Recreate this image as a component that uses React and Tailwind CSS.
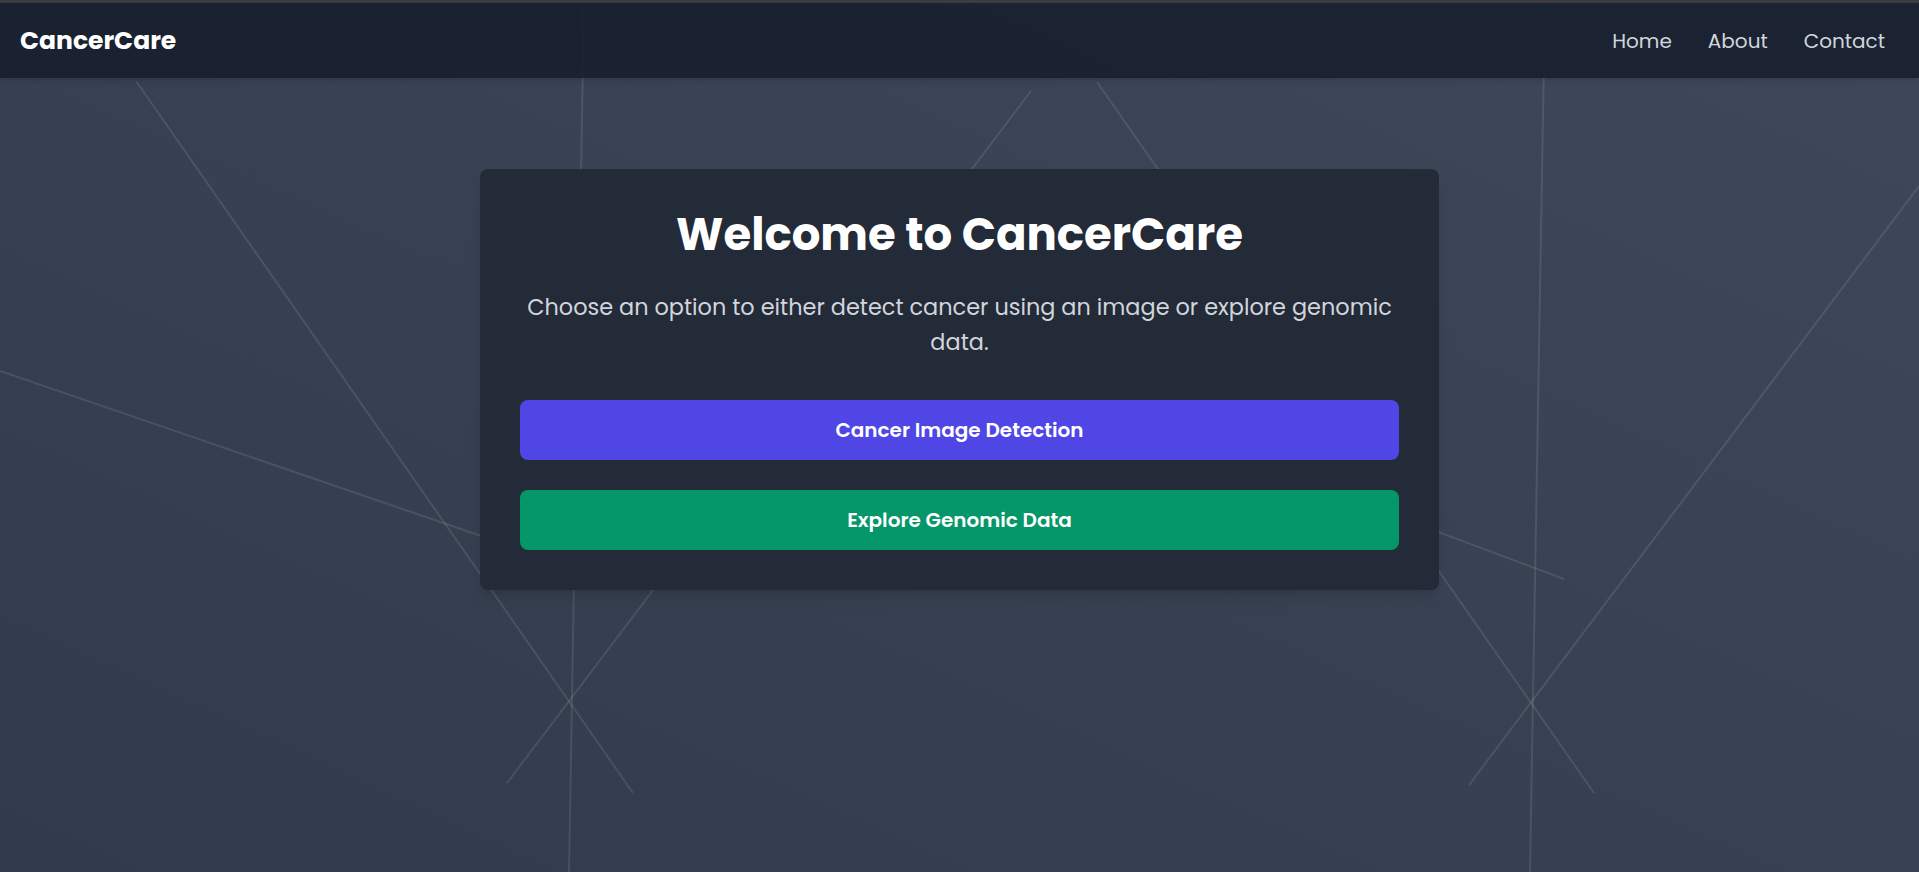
import React from 'react'

const lines = [
  [136, 81, 633, 793],
  [584, 0, 569, 872],
  [1031, 91, 507, 783],
  [1097, 82, 1594, 793],
  [1545, 0, 1530, 872],
  [1919, 186, 1469, 785],
  [0, 371, 560, 563],
  [1350, 499, 1564, 579],
]

export default function App() {
  return (
    <div className="relative min-h-screen overflow-hidden bg-linear-to-tr from-[#323b4b] to-[#3f4859] font-['Poppins','Inter',sans-serif]">
      {/* background lines */}
      <svg className="absolute inset-0 w-full h-full pointer-events-none" viewBox="0 0 1919 872" preserveAspectRatio="none">
        {lines.map(([x1, y1, x2, y2], i) => (
          <line key={i} x1={x1} y1={y1} x2={x2} y2={y2} stroke="rgba(255,255,255,0.1)" strokeWidth="2" />
        ))}
      </svg>

      <div className="relative h-[3px] bg-[#3c3c3c]" />
      <nav className="relative z-10 h-[75px] flex items-center justify-between pl-5 pr-[34px] bg-[#171e2e]/90 shadow-md">
        <span className="text-[25px] font-bold text-white">CancerCare</span>
        <div className="flex items-center gap-9 text-xl text-gray-300">
          <a href="#">Home</a>
          <a href="#">About</a>
          <a href="#">Contact</a>
        </div>
      </nav>

      <main className="relative z-10 flex justify-center pt-[91px]">
        <div className="w-1/2 bg-[#232a38] rounded-lg shadow-lg p-10 text-center">
          <h1 className="text-[45px] font-bold text-white leading-[52px] mb-[29px]">Welcome to CancerCare</h1>
          <p className="text-[22.4px] leading-[35px] text-gray-300 mb-10">
            Choose an option to either detect cancer using an image or explore genomic data.
          </p>
          <button className="w-full py-4 text-xl leading-7 font-semibold text-white bg-[#4f46e5] rounded-lg">Cancer Image Detection</button>
          <button className="w-full py-4 mt-[30px] text-xl leading-7 font-semibold text-white bg-[#059669] rounded-lg">Explore Genomic Data</button>
        </div>
      </main>
    </div>
  )
}
